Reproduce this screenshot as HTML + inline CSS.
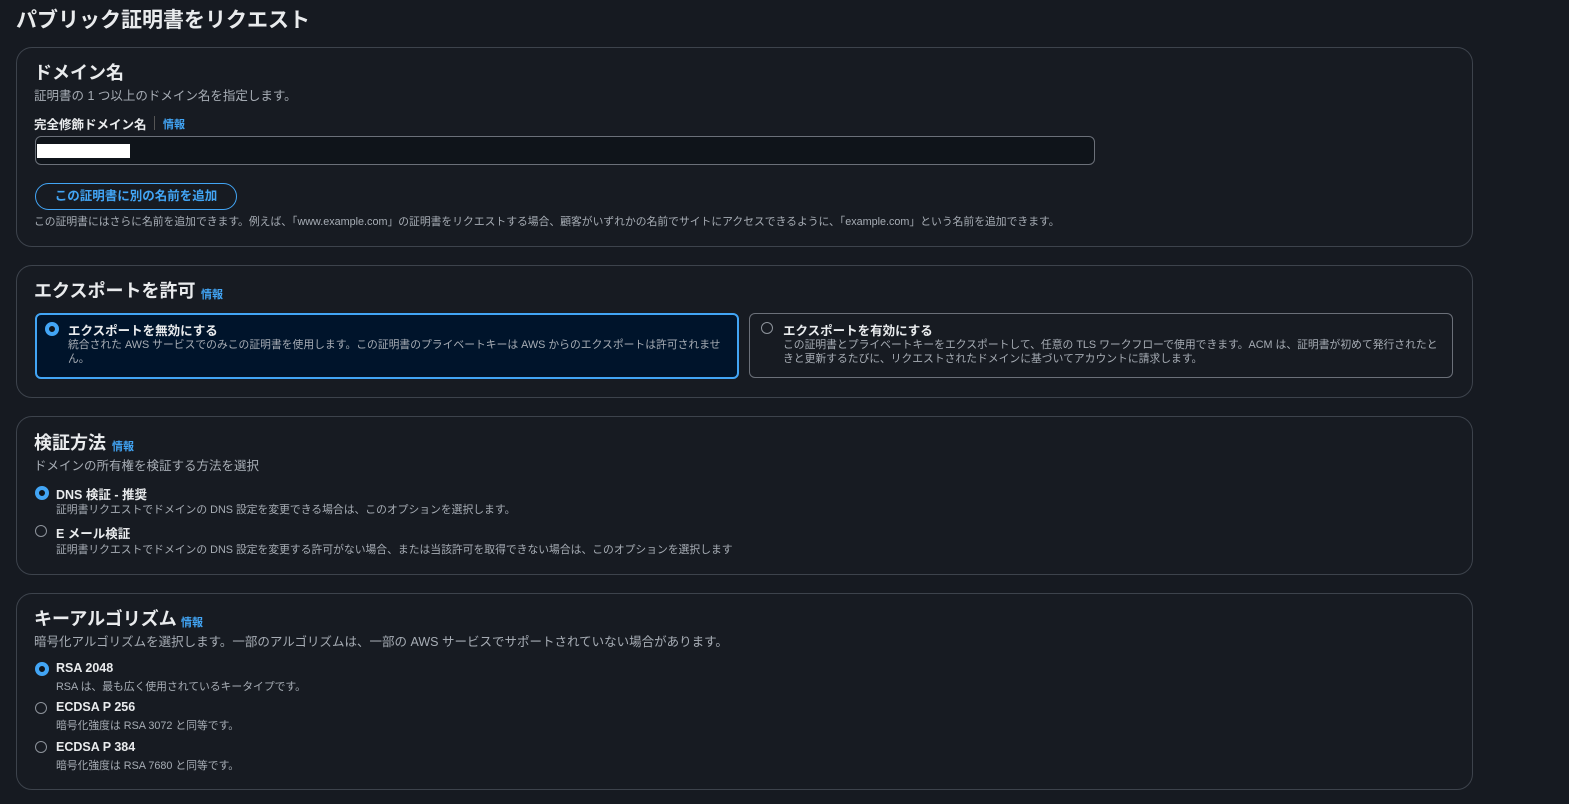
<!DOCTYPE html>
<html><head><meta charset="utf-8"><style>
body{margin:0;background:#161a21;font-family:"Liberation Sans","Noto Sans CJK JP",sans-serif;color:#e9ebed;width:1569px;height:804px;overflow:hidden;position:relative}
.a{position:absolute;white-space:nowrap}
.card{position:absolute;left:16px;width:1455px;border:1px solid #3d434c;border-radius:16px;background:#171b22}
h1{position:absolute;left:16px;top:4px;margin:0;font-size:21px;font-weight:bold;color:#e9ebed}
.h{font-size:18px;font-weight:bold;color:#e9ebed}
.d{font-size:12.5px;color:#a7adb5}
.s{font-size:10.8px;color:#a7adb5}
.l{font-size:12.5px;font-weight:bold;color:#e9ebed}
.i{font-size:11px;font-weight:bold;color:#42a5f5}
.r{position:absolute;width:10px;height:10px;border-radius:50%;border:1.5px solid #8d939b}
.rs{position:absolute;width:6px;height:6px;border-radius:50%;border:4px solid #42a5f5;background:#0f141a}
</style></head><body>
<h1>パブリック証明書をリクエスト</h1>

<div class="card" style="top:47px;height:198px"></div>
<div class="a h" style="left:34px;top:59px">ドメイン名</div>
<div class="a d" style="left:34px;top:85px">証明書の 1 つ以上のドメイン名を指定します。</div>
<div class="a l" style="left:34px;top:114px">完全修飾ドメイン名</div>
<div class="a" style="left:154px;top:116px;width:1px;height:14px;background:#555"></div>
<div class="a i" style="left:163px;top:116px">情報</div>
<div class="a" style="left:35px;top:136px;width:1058px;height:27px;border:1px solid #6b7079;border-radius:6px;background:#0f141a"></div>
<div class="a" style="left:37px;top:144px;width:93px;height:14px;background:#fff"></div>
<div class="a" style="left:35px;top:183px;width:200px;height:25px;border:1.5px solid #42a5f5;border-radius:14px;color:#42a5f5;font-size:12.5px;font-weight:bold;text-align:center;line-height:24px">この証明書に別の名前を追加</div>
<div class="a s" style="left:34px;top:213px">この証明書にはさらに名前を追加できます。例えば、「www.example.com」の証明書をリクエストする場合、顧客がいずれかの名前でサイトにアクセスできるように、「example.com」という名前を追加できます。</div>

<div class="card" style="top:265px;height:131px"></div>
<div class="a h" style="left:34px;top:277px">エクスポートを許可</div>
<div class="a i" style="left:201px;top:286px">情報</div>
<div class="a" style="left:35px;top:313px;width:700px;height:62px;border:2px solid #42a5f5;border-radius:6px;background:#00142b"></div>
<div class="rs" style="left:45px;top:322px"></div>
<div class="a l" style="left:68px;top:320px">エクスポートを無効にする</div>
<div class="a s" style="left:68px;top:338px;line-height:14px">統合された AWS サービスでのみこの証明書を使用します。この証明書のプライベートキーは AWS からのエクスポートは許可されませ<br>ん。</div>
<div class="a" style="left:749px;top:313px;width:702px;height:63px;border:1px solid #6b7079;border-radius:6px"></div>
<div class="r" style="left:761px;top:322px"></div>
<div class="a l" style="left:783px;top:320px">エクスポートを有効にする</div>
<div class="a s" style="left:783px;top:338px;line-height:14px">この証明書とプライベートキーをエクスポートして、任意の TLS ワークフローで使用できます。ACM は、証明書が初めて発行されたと<br>きと更新するたびに、リクエストされたドメインに基づいてアカウントに請求します。</div>

<div class="card" style="top:416px;height:157px"></div>
<div class="a h" style="left:34px;top:429px">検証方法</div>
<div class="a i" style="left:112px;top:438px">情報</div>
<div class="a d" style="left:34px;top:455px">ドメインの所有権を検証する方法を選択</div>
<div class="rs" style="left:35px;top:486px"></div>
<div class="a l" style="left:56px;top:484px">DNS 検証 - 推奨</div>
<div class="a s" style="left:56px;top:501px">証明書リクエストでドメインの DNS 設定を変更できる場合は、このオプションを選択します。</div>
<div class="r" style="left:35px;top:525px"></div>
<div class="a l" style="left:56px;top:523px">E メール検証</div>
<div class="a s" style="left:56px;top:541px">証明書リクエストでドメインの DNS 設定を変更する許可がない場合、または当該許可を取得できない場合は、このオプションを選択します</div>

<div class="card" style="top:593px;height:195px"></div>
<div class="a h" style="left:34px;top:605px">キーアルゴリズム</div>
<div class="a i" style="left:181px;top:614px">情報</div>
<div class="a d" style="left:34px;top:631px">暗号化アルゴリズムを選択します。一部のアルゴリズムは、一部の AWS サービスでサポートされていない場合があります。</div>
<div class="rs" style="left:35px;top:662px"></div>
<div class="a l" style="left:56px;top:661px">RSA 2048</div>
<div class="a s" style="left:56px;top:678px">RSA は、最も広く使用されているキータイプです。</div>
<div class="r" style="left:35px;top:702px"></div>
<div class="a l" style="left:56px;top:700px">ECDSA P 256</div>
<div class="a s" style="left:56px;top:717px">暗号化強度は RSA 3072 と同等です。</div>
<div class="r" style="left:35px;top:741px"></div>
<div class="a l" style="left:56px;top:740px">ECDSA P 384</div>
<div class="a s" style="left:56px;top:757px">暗号化強度は RSA 7680 と同等です。</div>
</body></html>
